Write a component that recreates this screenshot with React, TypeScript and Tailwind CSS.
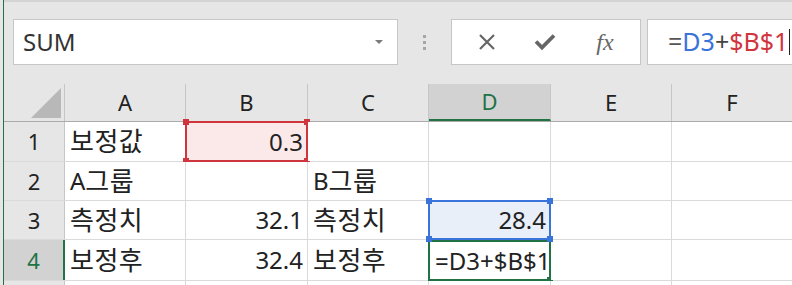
import React from 'react'

const font = { fontFamily: "'Noto Sans', 'Noto Sans CJK KR', sans-serif" }

const cols = ['A', 'B', 'C', 'D', 'E', 'F']
const widths = ['w-[121px]', 'w-[122px]', 'w-[121px]', 'w-[122px]', 'w-[121px]', 'w-[121px]']
const heights = ['h-[40px]', 'h-[39px]', 'h-[39px]', 'h-[41px]', 'h-[40px]']

type Cell = { text?: string; right?: boolean }

const rows: Cell[][] = [
    [{ text: '보정값' }, { text: '0.3', right: true }, {}, {}, {}, {}],
    [{ text: 'A그룹' }, {}, { text: 'B그룹' }, {}, {}, {}],
    [{ text: '측정치' }, { text: '32.1', right: true }, { text: '측정치' }, { text: '28.4', right: true }, {}, {}],
    [{ text: '보정후' }, { text: '32.4', right: true }, { text: '보정후' }, {}, {}, {}],
    [{}, {}, {}, {}, {}, {}],
]

// hangul glyphs render a bit wider in the original (Malgun Gothic)
const CellText = ({ text }: { text: string }) => (
    <>
        {text.split(/([\uac00-\ud7a3]+)/).filter(Boolean).map((part, i) =>
            /[\uac00-\ud7a3]/.test(part)
                ? <span key={i} className="text-[26px] tracking-[0.5px]">{part}</span>
                : <span key={i}>{part}</span>
        )}
    </>
)

const Handle = ({ cls }: { cls: string }) => (
    <div className={`absolute w-[6px] h-[6px] ${cls}`} />
)

const App = () => {
    return (
        <div className="w-[792px] h-[285px] overflow-hidden bg-[#e6e6e6] flex" style={font}>
            <div className="w-[3px] shrink-0 bg-[#e6e6e6]" />
            <div className="w-px shrink-0 bg-[#217346]" />
            <div className="flex-1 flex flex-col">
                {/* formula bar */}
                <div className="h-[84px] shrink-0 border-t-2 border-[#d4d4d4] flex items-start pt-[17px] pl-[9px]">
                    <div className="w-[385px] h-[46px] bg-white border border-[#c6c6c6] flex items-center justify-between pl-[9px] pr-[13px]">
                        <span className="text-[24px] text-[#333]">SUM</span>
                        <svg width="10" height="6" viewBox="0 0 10 6"><path d="M1 1h8L5 5z" fill="#7a7a7a" /></svg>
                    </div>
                    <div className="w-[53px] h-[46px] flex items-center justify-center">
                        <div className="flex flex-col gap-[3px]">
                            <div className="w-[3px] h-[3px] bg-[#a6a6a6]" />
                            <div className="w-[3px] h-[3px] bg-[#a6a6a6]" />
                            <div className="w-[3px] h-[3px] bg-[#a6a6a6]" />
                        </div>
                    </div>
                    <div className="w-[190px] h-[46px] bg-white border border-[#c6c6c6] flex items-center">
                        <div className="w-[63px] flex justify-center pl-[6px]">
                            <svg width="20" height="20" viewBox="0 0 20 20"><path d="M3 3l14 14M17 3L3 17" stroke="#666" strokeWidth="2.2" /></svg>
                        </div>
                        <div className="w-[60px] flex justify-center">
                            <svg width="22" height="18" viewBox="0 0 22 18"><path d="M2 8.5l6 6L20 2.5" stroke="#666" strokeWidth="3.8" fill="none" /></svg>
                        </div>
                        <div className="w-[60px] flex justify-center">
                            <span className="text-[24px] italic text-[#666] leading-none" style={{ fontFamily: "'Liberation Serif', serif" }}>fx</span>
                        </div>
                    </div>
                    <div className="ml-[6px] flex-1 h-[46px] bg-white border border-[#c6c6c6] border-r-0 flex items-center pl-[20px] text-[25px] whitespace-nowrap">
                        <span className="text-[#555]">=</span>
                        <span className="text-[#3a73d9]">D3</span>
                        <span className="text-[#444]">+</span>
                        <span className="text-[#d0353e]">$B$1</span>
                        <span className="w-px h-[26px] bg-[#222] ml-[1px]" />
                    </div>
                </div>
                {/* column headers */}
                <div className="flex h-[38px] shrink-0 border-b border-[#ababab]">
                    <div className="w-[61px] border-r border-[#c6c6c6] flex items-end justify-end pr-[3px] pb-[3px]">
                        <svg width="30" height="30" viewBox="0 0 30 30"><path d="M30 0V30H0z" fill="#b8b8b8" /></svg>
                    </div>
                    {cols.map((c, i) => (
                        <div
                            key={c}
                            className={`${widths[i]} border-r border-[#c6c6c6] flex items-center justify-center text-[22px] ${c === 'D' ? 'bg-[#d2d2d2] text-[#217346] border-b-2 border-b-[#217346]' : 'text-[#222]'}`}
                        >
                            {c}
                        </div>
                    ))}
                </div>
                {/* rows */}
                {rows.map((r, ri) => (
                    <div key={ri} className={`flex shrink-0 ${heights[ri]} border-b border-[#dadada]`}>
                        <div className={`w-[61px] flex items-center justify-center text-[22px] border-r ${ri === 3 ? 'bg-[#d2d2d2] text-[#217346] border-r-2 border-r-[#217346]' : 'text-[#222] border-[#c6c6c6]'}`}>
                            {ri < 4 ? ri + 1 : ''}
                        </div>
                        {r.map((cell, ci) => {
                            const isB1 = ri === 0 && ci === 1
                            const isD3 = ri === 2 && ci === 3
                            const isD4 = ri === 3 && ci === 3
                            const bg = isB1 ? 'bg-[#fbe9ea]' : isD3 ? 'bg-[#e8eff9]' : 'bg-white'
                            return (
                                <div
                                    key={ci}
                                    className={`relative ${widths[ci]} ${bg} border-r border-[#dadada] flex items-center text-[24px] text-[#222] whitespace-nowrap ${cell.right ? 'justify-end pr-[4px]' : 'pl-[5px]'}`}
                                >
                                    {cell.text && <CellText text={cell.text} />}
                                    {isD4 && <span className="absolute left-[6px] top-[3px] whitespace-nowrap overflow-hidden w-[112px]">=D3+$B$1</span>}
                                    {isB1 && (
                                        <div className="absolute -left-px -top-px -right-px -bottom-px border-2 border-[#d0353e]">
                                            <Handle cls="bg-[#d0353e] -left-[4px] -top-[4px]" />
                                            <Handle cls="bg-[#d0353e] -right-[4px] -top-[4px]" />
                                            <Handle cls="bg-[#d0353e] -left-[4px] -bottom-[4px]" />
                                            <Handle cls="bg-[#d0353e] -right-[4px] -bottom-[4px]" />
                                        </div>
                                    )}
                                    {isD3 && (
                                        <div className="absolute -left-px -top-px -right-px -bottom-px border-2 border-[#3a73d9] z-10">
                                            <Handle cls="bg-[#3a73d9] -left-[4px] -top-[4px]" />
                                            <Handle cls="bg-[#3a73d9] -right-[4px] -top-[4px]" />
                                            <Handle cls="bg-[#3a73d9] -left-[4px] -bottom-[4px]" />
                                            <Handle cls="bg-[#3a73d9] -right-[4px] -bottom-[4px]" />
                                        </div>
                                    )}
                                    {isD4 && (
                                        <div className="absolute -left-px top-0 -right-px -bottom-px border-2 border-[#217346]">
                                            <Handle cls="bg-[#217346] -right-[4px] -bottom-[4px]" />
                                        </div>
                                    )}
                                </div>
                            )
                        })}
                    </div>
                ))}
            </div>
        </div>
    )
}

export default App
